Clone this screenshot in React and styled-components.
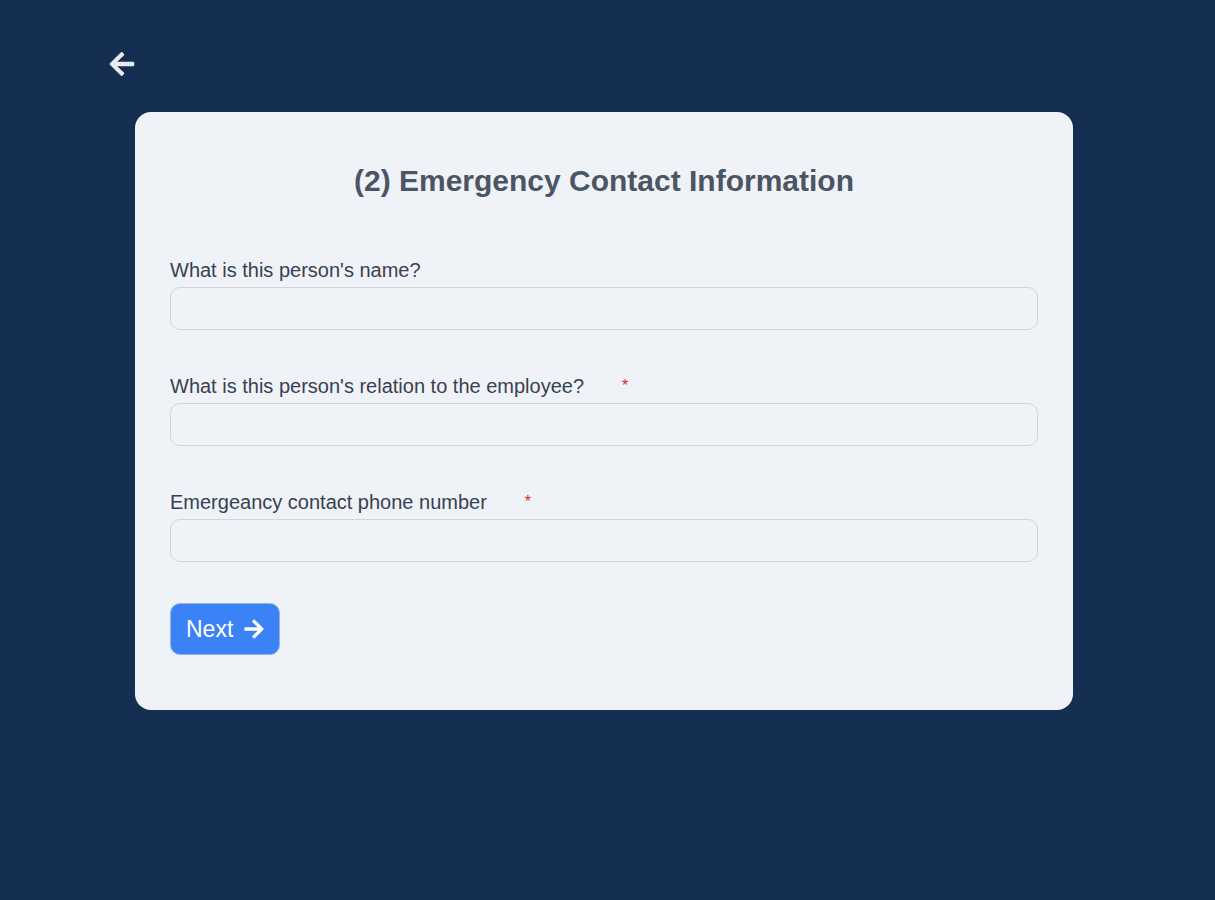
import React from "react";
import styled, { createGlobalStyle } from "styled-components";
import { FaArrowLeft, FaArrowRight } from "react-icons/fa";

const GlobalStyle = createGlobalStyle`
  html, body {
    margin: 0;
    padding: 0;
    background: #152f52;
    font-family: "Liberation Sans", Arial, sans-serif;
  }
`;

const fields = [
  { label: "What is this person's name?", required: false },
  { label: "What is this person's relation to the employee?", required: true },
  { label: "Emergeancy contact phone number", required: true },
];

const App = () => {
  return (
    <Page>
      <GlobalStyle />
      <BackButton aria-label="Back">
        <FaArrowLeft />
      </BackButton>
      <Card>
        <Title>(2) Emergency Contact Information</Title>
        <Form>
          {fields.map((f) => (
            <Field key={f.label}>
              <Label>
                {f.label}
                {f.required && <Required>*</Required>}
              </Label>
              <Input type="text" />
            </Field>
          ))}
          <NextButton type="button">
            Next <FaArrowRight />
          </NextButton>
        </Form>
      </Card>
    </Page>
  );
};

const Page = styled.div`
  min-height: 900px;
  padding: 50px 0 0 108px;
  box-sizing: border-box;
`;

const BackButton = styled.button`
  display: flex;
  background: none;
  border: none;
  padding: 0;
  color: #e8ecf2;
  font-size: 28px;
  cursor: pointer;
`;

const Card = styled.div`
  margin: 34px 0 0 27px;
  width: 938px;
  box-sizing: border-box;
  background: #eff3f8;
  border-radius: 16px;
  padding: 51px 35px 55px;
`;

const Title = styled.h2`
  margin: 0;
  text-align: center;
  font-size: 30px;
  line-height: 36px;
  font-weight: 700;
  color: #4b5563;
`;

const Form = styled.div`
  margin-top: 59px;
  display: flex;
  flex-direction: column;
  align-items: flex-start;
  gap: 44px;
`;

const Field = styled.div`
  width: 100%;
  display: flex;
  flex-direction: column;
  gap: 5px;
`;

const Label = styled.label`
  font-size: 20px;
  line-height: 24px;
  color: #374151;
`;

const Required = styled.span`
  color: #dc2626;
  font-size: 16px;
  margin-left: 38px;
  vertical-align: top;
`;

const Input = styled.input`
  height: 43px;
  box-sizing: border-box;
  width: 100%;
  border: 1px solid #d1d5db;
  border-radius: 10px;
  background: #eff3f8;
  font-size: 18px;
  padding: 0 12px;
  outline: none;
`;

const NextButton = styled.button`
  display: flex;
  align-items: center;
  gap: 10px;
  height: 52px;
  padding: 0 14px 0 15px;
  background: #3b82f6;
  color: #ffffff;
  border: 1px solid #93b4e6;
  border-radius: 10px;
  font-family: "Liberation Sans", Arial, sans-serif;
  font-size: 23px;
  cursor: pointer;
  margin-top: -3px;
  svg {
    font-size: 22px;
  }
`;

export default App;
